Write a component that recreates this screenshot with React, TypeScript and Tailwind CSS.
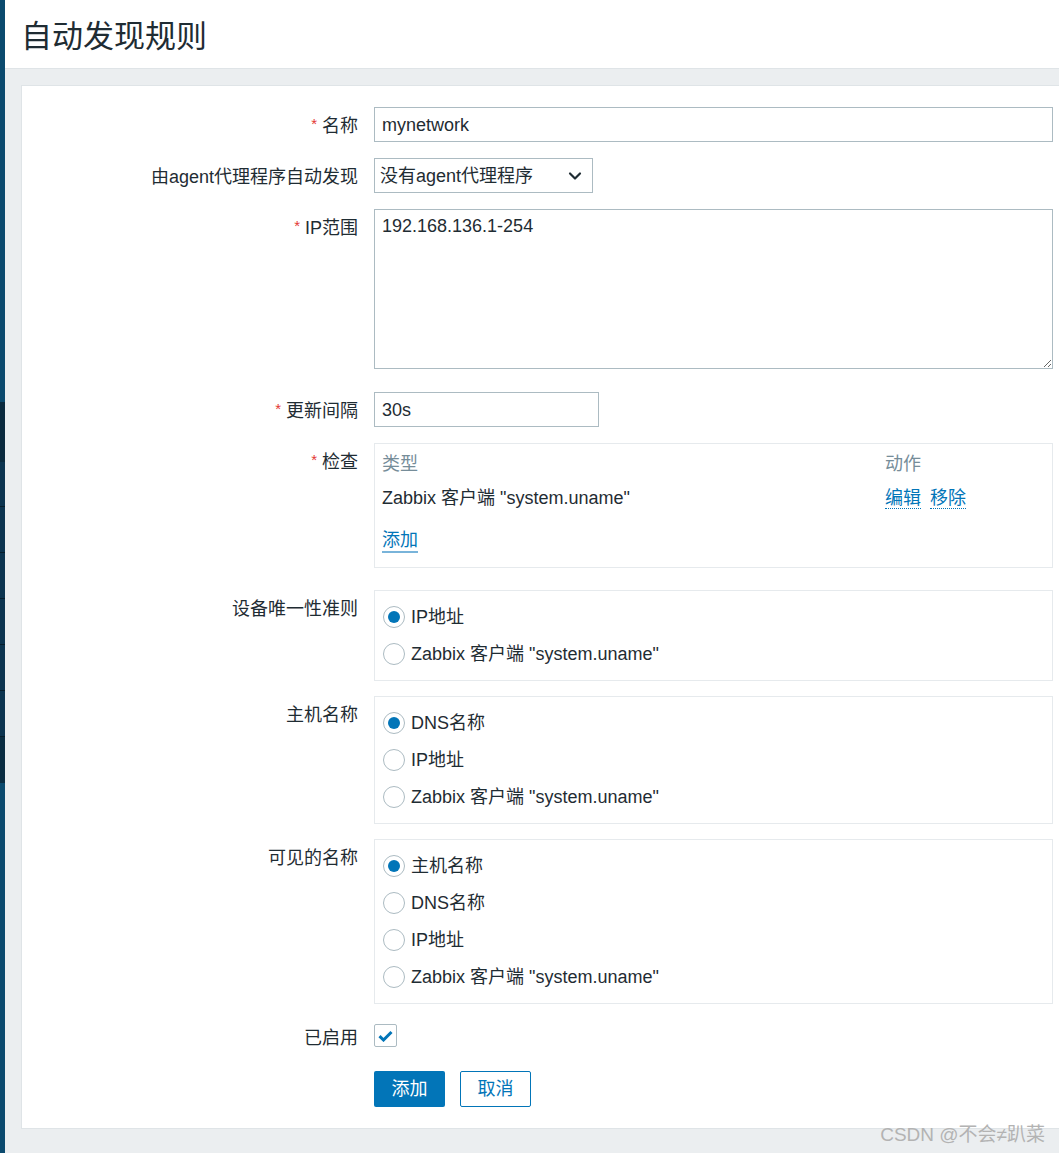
import { ChevronDown } from 'lucide-react'

const FONT = "font-['Liberation_Sans','Noto_Sans_CJK_SC',sans-serif]"

function Label({ text, required, h = 35 }: { text: string; required?: boolean; h?: number }) {
  return (
    <div className="w-[336px] shrink-0 flex justify-end items-start">
      <div className="flex items-center pt-[3px]" style={{ height: h }}>
        {required && <span className="text-[#e33734] text-[15px] mr-[5px] -mt-[4px]">*</span>}
        <span>{text}</span>
      </div>
    </div>
  )
}

function Row({ label, required, mt, children }: { label: string; required?: boolean; mt: number; children: React.ReactNode }) {
  return (
    <div className="flex gap-[16px] pr-[6px]" style={{ marginTop: mt }}>
      <Label text={label} required={required} />
      <div className="flex-1">{children}</div>
    </div>
  )
}

function Radio({ label, checked }: { label: string; checked?: boolean }) {
  return (
    <div className="h-[37px] flex items-center gap-[6px]">
      <span className="w-[22px] h-[22px] rounded-full border border-[#acbbc2] bg-white flex items-center justify-center">
        {checked && <span className="w-[12px] h-[12px] rounded-full bg-[#0275b8]" />}
      </span>
      <span className="pt-[2px]">{label}</span>
    </div>
  )
}

function RadioBox({ items, checked }: { items: string[]; checked: number }) {
  return (
    <div className="border border-[#e6eaed] pt-[7px] pb-[8px] pl-[8px]">
      {items.map((it, i) => (
        <Radio key={it} label={it} checked={i === checked} />
      ))}
    </div>
  )
}

const AGENT = 'Zabbix 客户端 "system.uname"'

const SIDE = [
  { h: 402, c: 'bg-[#0b4a6e]' },
  { h: 60, c: 'bg-[#0a2a3e]' },
  { h: 45, c: 'bg-[#0c3450] border-b border-[#061d2c]' },
  { h: 46, c: 'bg-[#0c3450] border-b border-[#061d2c]' },
  { h: 46, c: 'bg-[#0c3450] border-b border-[#061d2c]' },
  { h: 46, c: 'bg-[#0c3450] border-b border-[#061d2c]' },
  { h: 46, c: 'bg-[#0c3450] border-b border-[#061d2c]' },
  { h: 46, c: 'bg-[#0c3450] border-b border-[#061d2c]' },
  { h: 46, c: 'bg-[#0a2d42]' },
]

export default function App() {
  return (
    <div className={`${FONT} relative flex min-h-[1153px] bg-[#ebeef0] text-[18px] text-[#1f2c33]`}>
      {/* sidebar edge */}
      <div className="w-[5px] shrink-0 flex flex-col bg-[#0b4a6e]">
        {SIDE.map((s, i) => (
          <div key={i} className={s.c} style={{ height: s.h }} />
        ))}
      </div>

      <div className="flex-1 flex flex-col">
        <header className="h-[69px] bg-white border-b border-[#dfe4e7] flex items-center pl-[16px]">
          <h1 className="text-[31px] font-normal leading-none mt-[5px]">自动发现规则</h1>
        </header>

        <div className="pl-[16px] pt-[16px] pb-[25px]">
          <div className="bg-white border-l border-t border-b border-[#dfe4e7] pt-[21px] pb-[21px]">
            <Row label="名称" required mt={0}>
              <input
                defaultValue="mynetwork"
                className="w-full h-[35px] border border-[#acbbc2] px-[7px] pt-[2px] outline-none"
              />
            </Row>

            <Row label="由agent代理程序自动发现" mt={16}>
              <div className="relative w-[219px] h-[35px]">
                <select className="appearance-none w-full h-full border border-[#acbbc2] pl-[5px] pt-[2px] bg-white outline-none">
                  <option>没有agent代理程序</option>
                </select>
                <ChevronDown
                  size={20}
                  strokeWidth={2.6}
                  className="absolute right-[8px] top-[8px] pointer-events-none text-[#1f2c33]"
                />
              </div>
            </Row>

            <Row label="IP范围" required mt={16}>
              <textarea
                defaultValue="192.168.136.1-254"
                className="block w-full h-[160px] border border-[#acbbc2] px-[7px] pt-[3px] outline-none resize-y"
              />
            </Row>

            <Row label="更新间隔" required mt={23}>
              <input
                defaultValue="30s"
                className="w-[225px] h-[35px] border border-[#acbbc2] px-[7px] pt-[2px] outline-none"
              />
            </Row>

            <Row label="检查" required mt={16}>
              <div className="border border-[#e6eaed] pt-[3px] pb-[10px] pl-[7px]">
                <div className="flex h-[34px] items-center text-[#768d99]">
                  <span className="flex-1">类型</span>
                  <span className="w-[167px]">动作</span>
                </div>
                <div className="flex h-[34px] items-center">
                  <span className="flex-1">{AGENT}</span>
                  <span className="w-[167px] flex gap-[9px] text-[#0275b8]">
                    <span className="leading-[20px] border-b border-dotted border-[#0275b8]">编辑</span>
                    <span className="leading-[20px] border-b border-dotted border-[#0275b8]">移除</span>
                  </span>
                </div>
                <div className="flex h-[34px] items-center mt-[8px]">
                  <span className="leading-[22px] text-[#0275b8] border-b-2 border-[#79b4da] mt-[2px]">添加</span>
                </div>
              </div>
            </Row>

            <Row label="设备唯一性准则" mt={22}>
              <RadioBox items={['IP地址', AGENT]} checked={0} />
            </Row>

            <Row label="主机名称" mt={15}>
              <RadioBox items={['DNS名称', 'IP地址', AGENT]} checked={0} />
            </Row>

            <Row label="可见的名称" mt={15}>
              <RadioBox items={['主机名称', 'DNS名称', 'IP地址', AGENT]} checked={0} />
            </Row>

            <div className="flex gap-[16px] mt-[20px]">
              <div className="w-[336px] shrink-0 flex justify-end items-center h-[25px] pt-[3px]">
                <span>已启用</span>
              </div>
              <span className="w-[23px] h-[23px] border border-[#acbbc2] rounded-[2px] flex items-center justify-center">
                <svg width="15" height="12" viewBox="0 0 15 12">
                  <path d="M1.5 6.2 L5.5 10 L13.5 2" fill="none" stroke="#0275b8" strokeWidth="3" />
                </svg>
              </span>
            </div>

            <div className="flex gap-[15px] mt-[22px] pl-[352px]">
              <button className="w-[71px] h-[36px] rounded-[2px] bg-[#0275b8] text-white pt-[1px]">添加</button>
              <button className="w-[71px] h-[36px] rounded-[2px] border border-[#0275b8] bg-white text-[#0275b8] pt-[1px]">取消</button>
            </div>
          </div>
        </div>
      </div>

      <span className="absolute right-[14px] bottom-[5px] text-[19px] text-[#b3b3b3]">CSDN @不会≠趴菜</span>
    </div>
  )
}
